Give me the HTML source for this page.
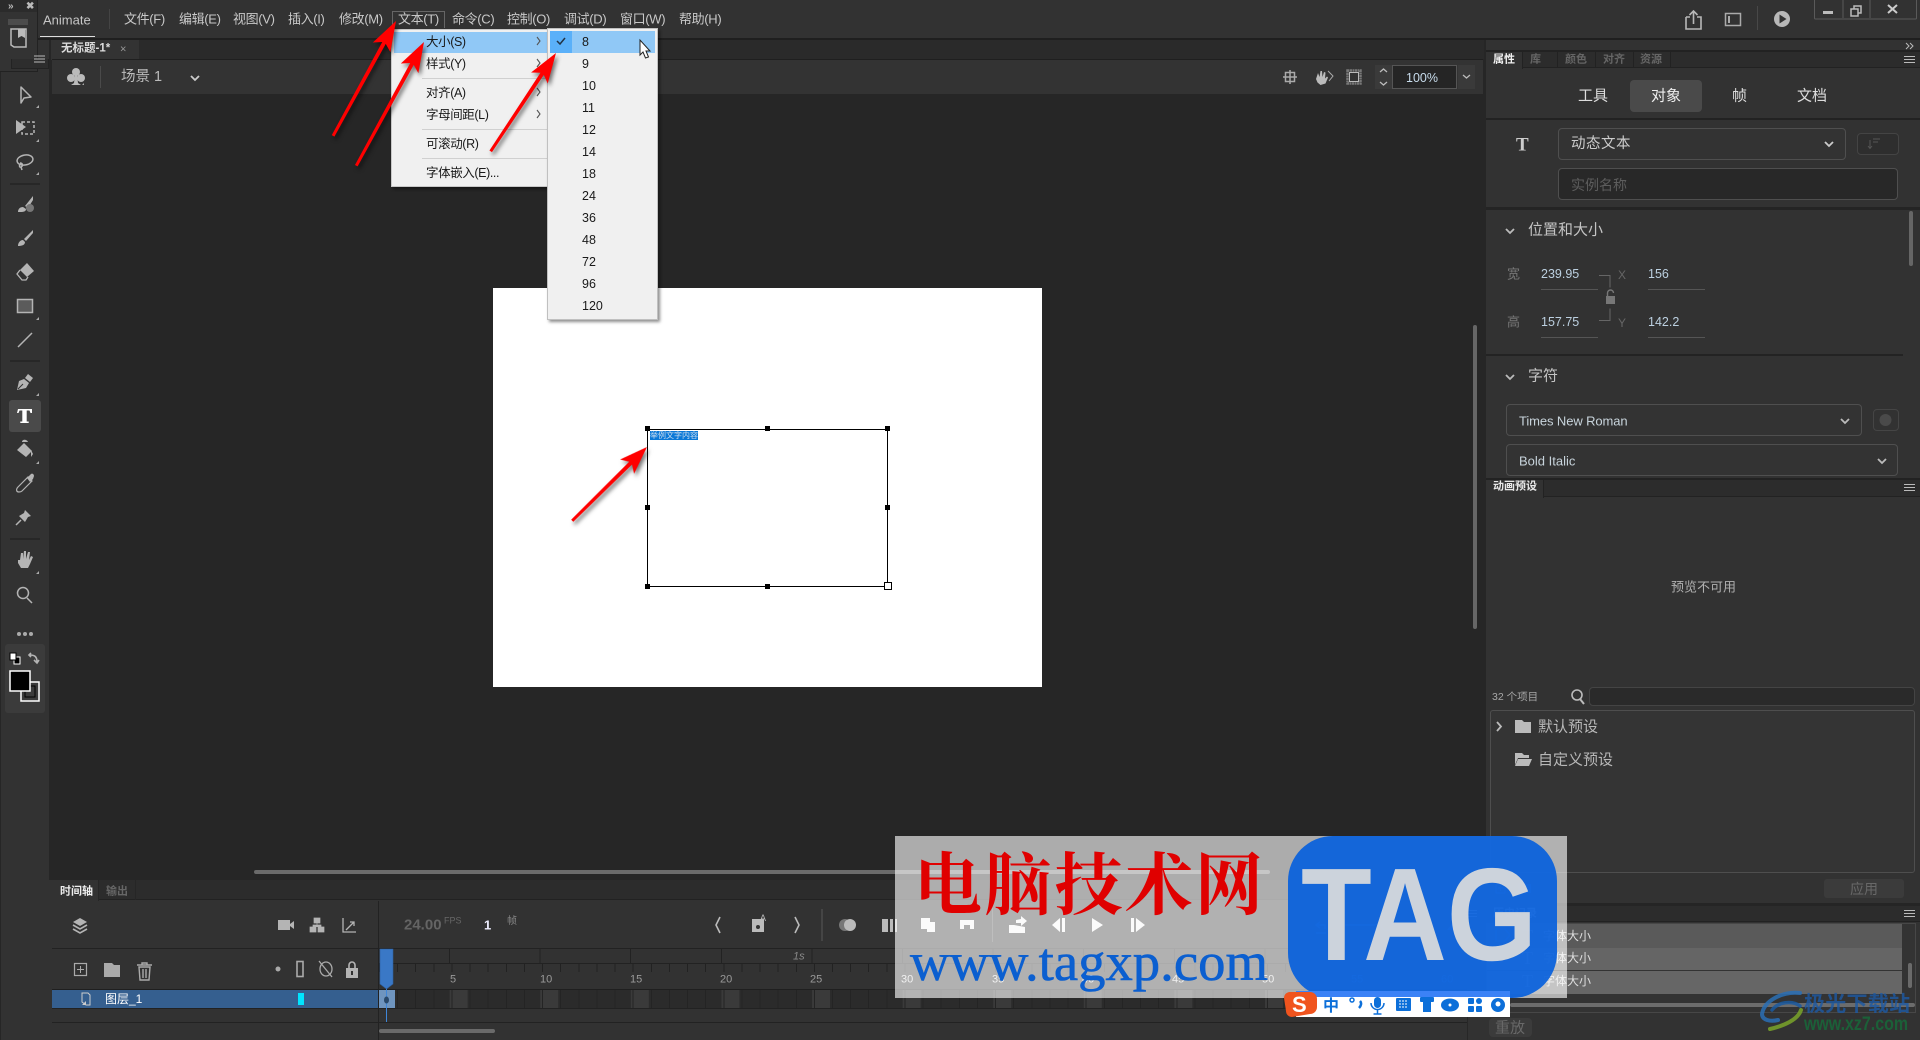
<!DOCTYPE html>
<html lang="zh"><head><meta charset="utf-8"><title>Animate</title>
<style>
html,body{margin:0;padding:0;width:1920px;height:1040px;overflow:hidden;background:#323232}
body{position:relative;font-family:"Liberation Sans","Noto Sans CJK SC",sans-serif;color:#ccc}
div.a{position:absolute;box-sizing:border-box}
.t{position:absolute;white-space:nowrap;line-height:1;transform:translateY(calc(-50% + 1px));font-size:13px}
svg.full{position:absolute;left:0;top:0;width:1920px;height:1040px}
.m{color:#c8c8c8;letter-spacing:-.35px}
.k{color:#1a1a1a;font-size:12.5px}
.n{letter-spacing:-.4px}
.d{border:1px solid #4f4f4f;border-radius:4px}
.ico{fill:#b4b4b4;stroke:none}
.ln{fill:none;stroke:#b4b4b4;stroke-width:1.5}
</style></head><body>

<!-- canvas area -->
<div class="a" style="left:49px;top:39px;width:1437px;height:841px;background:#262626"></div>
<div class="a" style="left:0;top:0;width:1920px;height:38px;background:#323232"></div>
<div class="a" style="left:0;top:38px;width:1920px;height:2px;background:#1f1f1f"></div>
<div class="a" style="left:0;top:40px;width:49px;height:1000px;background:#323232;border-left:1px solid #262626"></div>
<div class="a" style="left:52px;top:40px;width:1432px;height:19px;background:#2a2a2a"></div>
<div class="a" style="left:51px;top:40px;width:88px;height:20px;background:#333"></div>
<div class="a" style="left:52px;top:59px;width:1431px;height:1px;background:#1f1f1f"></div>
<div class="a" style="left:52px;top:60px;width:1431px;height:34px;background:#333"></div>
<div class="a" style="left:493px;top:288px;width:549px;height:399px;background:#fff"></div>

<!-- text box on stage -->
<div class="a" style="left:647px;top:429px;width:241px;height:158px;border:1px solid #000"></div>
<div class="a" style="left:650px;top:431px;width:48px;height:9px;background:#0a78d7;color:#cde;font-size:8px;line-height:9px;white-space:nowrap;overflow:hidden">举例文字内容</div>
<div class="a" style="left:645px;top:426px;width:5px;height:5px;background:#000"></div>
<div class="a" style="left:765px;top:426px;width:5px;height:5px;background:#000"></div>
<div class="a" style="left:885px;top:426px;width:5px;height:5px;background:#000"></div>
<div class="a" style="left:645px;top:505px;width:5px;height:5px;background:#000"></div>
<div class="a" style="left:885px;top:505px;width:5px;height:5px;background:#000"></div>
<div class="a" style="left:645px;top:584px;width:5px;height:5px;background:#000"></div>
<div class="a" style="left:765px;top:584px;width:5px;height:5px;background:#000"></div>
<div class="a" style="left:884px;top:582px;width:8px;height:8px;background:#fff;border:1px solid #000"></div>

<!-- scrollbars -->
<div class="a" style="left:1473px;top:325px;width:4px;height:304px;background:#666;border-radius:2px"></div>
<div class="a" style="left:254px;top:870px;width:1016px;height:4px;background:#6a6a6a;border-radius:2px"></div>

<!-- right panel -->
<div class="a" style="left:1486px;top:40px;width:434px;height:1000px;background:#323232"></div>
<div class="a" style="left:1486px;top:50px;width:434px;height:2px;background:#222"></div>
<div class="a" style="left:1486px;top:52px;width:434px;height:16px;background:#2c2c2c;border-bottom:1px solid #222"></div>
<div class="a" style="left:1486px;top:52px;width:37px;height:17px;background:#323232;border-right:1px solid #222"></div>
<div class="a" style="left:1557px;top:52px;width:1px;height:16px;background:#222"></div>
<div class="a" style="left:1595px;top:52px;width:1px;height:16px;background:#222"></div>
<div class="a" style="left:1633px;top:52px;width:1px;height:16px;background:#222"></div>
<div class="a" style="left:1670px;top:52px;width:1px;height:16px;background:#222"></div>
<span class="t" style="left:1493px;top:59px;font-size:11px;font-weight:700;color:#f0f0f0">属性</span>
<span class="t" style="left:1530px;top:59px;font-size:11px;font-weight:700;color:#666">库</span>
<span class="t" style="left:1565px;top:59px;font-size:11px;font-weight:700;color:#666">颜色</span>
<span class="t" style="left:1603px;top:59px;font-size:11px;font-weight:700;color:#666">对齐</span>
<span class="t" style="left:1640px;top:59px;font-size:11px;font-weight:700;color:#666">资源</span>
<div class="a" style="left:1630px;top:80px;width:72px;height:32px;background:#4a4a4a;border-radius:4px"></div>
<span class="t" style="left:1578px;top:95px;font-size:15px;color:#ddd">工具</span>
<span class="t" style="left:1651px;top:95px;font-size:15px;color:#eee">对象</span>
<span class="t" style="left:1732px;top:95px;font-size:15px;color:#ddd">帧</span>
<span class="t" style="left:1797px;top:95px;font-size:15px;color:#ddd">文档</span>
<div class="a" style="left:1486px;top:118px;width:434px;height:2px;background:#222"></div>
<span class="t" style="left:1516px;top:144px;font-size:19px;font-family:'Liberation Serif',serif;font-weight:700;color:#ccc">T</span>
<div class="a d" style="left:1558px;top:128px;width:288px;height:32px;background:#333"></div>
<span class="t" style="left:1571px;top:143px;font-size:14.5px;color:#ccc;letter-spacing:.5px">动态文本</span>
<div class="a d" style="left:1857px;top:133px;width:42px;height:22px;background:#2e2e2e;border-color:#444"></div>
<div class="a d" style="left:1558px;top:168px;width:340px;height:32px;background:#282828"></div>
<span class="t" style="left:1571px;top:184px;font-size:14px;color:#5d5d5d">实例名称</span>
<div class="a" style="left:1486px;top:207px;width:434px;height:3px;background:#242424"></div>
<span class="t" style="left:1528px;top:229px;font-size:15px;color:#c4c4c4">位置和大小</span>
<div class="a" style="left:1909px;top:211px;width:4px;height:55px;background:#666;border-radius:2px"></div>
<span class="t" style="left:1507px;top:273px;font-size:13px;color:#777">宽</span>
<span class="t" style="left:1507px;top:321px;font-size:13px;color:#777">高</span>
<span class="t" style="left:1541px;top:273px;font-size:12.5px;color:#bcd0e0">239.95</span>
<span class="t" style="left:1541px;top:321px;font-size:12.5px;color:#bcd0e0">157.75</span>
<span class="t" style="left:1618px;top:274px;font-size:12px;color:#666">X</span>
<span class="t" style="left:1618px;top:322px;font-size:12px;color:#666">Y</span>
<span class="t" style="left:1648px;top:273px;font-size:12.5px;color:#bcd0e0">156</span>
<span class="t" style="left:1648px;top:321px;font-size:12.5px;color:#bcd0e0">142.2</span>
<div class="a" style="left:1541px;top:289px;width:57px;height:1px;background:#555"></div>
<div class="a" style="left:1648px;top:289px;width:57px;height:1px;background:#555"></div>
<div class="a" style="left:1541px;top:337px;width:57px;height:1px;background:#555"></div>
<div class="a" style="left:1648px;top:337px;width:57px;height:1px;background:#555"></div>
<div class="a" style="left:1486px;top:354px;width:417px;height:2px;background:#232323"></div>
<span class="t" style="left:1528px;top:375px;font-size:15px;color:#c4c4c4">字符</span>
<div class="a d" style="left:1506px;top:404px;width:356px;height:32px;background:#333"></div>
<span class="t" style="left:1519px;top:420px;font-size:13px;color:#c8d4dc;letter-spacing:-.1px">Times New Roman</span>
<div class="a d" style="left:1873px;top:409px;width:26px;height:22px;border-color:#454545"></div>
<div class="a d" style="left:1506px;top:444px;width:392px;height:32px;background:#333"></div>
<span class="t" style="left:1519px;top:460px;font-size:13px;color:#c8d4dc">Bold Italic</span>

<div class="a" style="left:1486px;top:478px;width:434px;height:2px;background:#222"></div>
<div class="a" style="left:1486px;top:480px;width:434px;height:17px;background:#2c2c2c;border-bottom:1px solid #222"></div>
<div class="a" style="left:1486px;top:480px;width:58px;height:18px;background:#323232;border-right:1px solid #222"></div>
<span class="t" style="left:1493px;top:486px;font-size:11px;font-weight:700;color:#e8e8e8">动画预设</span>
<span class="t" style="left:1671px;top:586px;font-size:13px;color:#b0b0b0">预览不可用</span>
<span class="t" style="left:1492px;top:696px;font-size:10.5px;color:#a8a8a8">32 个项目</span>
<div class="a" style="left:1589px;top:687px;width:326px;height:19px;background:#2a2a2a;border:1px solid #444;border-radius:4px"></div>
<div class="a" style="left:1490px;top:710px;width:425px;height:163px;border:1px solid #4e4e4e;border-radius:3px;background:#343434"></div>
<span class="t" style="left:1538px;top:726px;font-size:15px;color:#b8b8b8">默认预设</span>
<span class="t" style="left:1538px;top:759px;font-size:15px;color:#b8b8b8">自定义预设</span>
<div class="a" style="left:1824px;top:879px;width:80px;height:19px;background:#3b3b3b;border-radius:3px"></div>
<span class="t" style="left:1850px;top:888px;font-size:14px;color:#686868">应用</span>
<div class="a" style="left:1486px;top:903px;width:434px;height:3px;background:#252525"></div>
<div class="a" style="left:1486px;top:906px;width:434px;height:16px;background:#2c2c2c;border-bottom:1px solid #222"></div>
<div class="a" style="left:1486px;top:906px;width:60px;height:17px;background:#323232;border-right:1px solid #222"></div>
<span class="t" style="left:1493px;top:913px;font-size:11px;font-weight:700;color:#e8e8e8">历史记录</span>
<div class="a" style="left:1486px;top:923px;width:430px;height:90px;border:1px solid #474747;background:#333"></div>
<div class="a" style="left:1487px;top:924px;width:415px;height:24px;background:#5a5a5a"></div>
<div class="a" style="left:1487px;top:948px;width:415px;height:22px;background:#656565"></div>
<div class="a" style="left:1487px;top:971px;width:415px;height:23px;background:#666"></div>
<span class="t" style="left:1543px;top:935px;font-size:12px;color:#ddd">字体大小</span>
<span class="t" style="left:1543px;top:957px;font-size:12px;color:#ddd">字体大小</span>
<span class="t" style="left:1543px;top:980px;font-size:12px;color:#ddd">字体大小</span>
<span class="t" style="left:1522px;top:935px;font-size:18px;font-family:'Liberation Serif',serif;color:#ddd">T</span>
<span class="t" style="left:1522px;top:957px;font-size:18px;font-family:'Liberation Serif',serif;color:#ddd">T</span>
<span class="t" style="left:1522px;top:980px;font-size:18px;font-family:'Liberation Serif',serif;color:#ddd">T</span>
<div class="a" style="left:1908px;top:963px;width:4px;height:25px;background:#6a6a6a;border-radius:2px"></div>
<div class="a" style="left:1510px;top:1003px;width:405px;height:4px;background:#6c6c6c;border-radius:2px"></div>
<div class="a" style="left:1489px;top:1018px;width:43px;height:19px;background:#3b3b3b;border-radius:4px"></div>
<span class="t" style="left:1495px;top:1027px;font-size:15px;color:#686868">重放</span>

<!-- timeline -->
<div class="a" style="left:52px;top:880px;width:1432px;height:160px;background:#323232"></div>
<div class="a" style="left:52px;top:880px;width:1415px;height:20px;background:#2c2c2c;border-bottom:1px solid #222"></div>
<div class="a" style="left:52px;top:880px;width:47px;height:21px;background:#323232;border-right:1px solid #262626"></div>
<div class="a" style="left:135px;top:880px;width:1px;height:20px;background:#262626"></div>
<span class="t" style="left:60px;top:891px;font-size:11px;font-weight:700;color:#eee">时间轴</span>
<span class="t" style="left:106px;top:891px;font-size:11px;font-weight:700;color:#666">输出</span>
<div class="a" style="left:52px;top:948px;width:1415px;height:1px;background:#222"></div>
<div class="a" style="left:378px;top:901px;width:1px;height:139px;background:#222"></div>
<div class="a" style="left:1467px;top:880px;width:1px;height:160px;background:#272727"></div>
<!-- ruler -->
<div class="a" style="left:379px;top:949px;width:1088px;height:14px;background:repeating-linear-gradient(90deg,transparent 0 70px,#222 70px 71px,transparent 71px 90.6px)"></div>
<div class="a" style="left:379px;top:963px;width:1088px;height:1px;background:#222"></div>
<div class="a" style="left:379px;top:964px;width:1088px;height:8px;background:repeating-linear-gradient(90deg,#222 0 1px,transparent 1px 18.12px)"></div>
<span class="t" style="left:793px;top:956px;font-size:11px;font-style:italic;color:#888">1s</span>
<span class="t" style="left:450px;top:979px;font-size:11px;color:#999">5</span>
<span class="t" style="left:540px;top:979px;font-size:11px;color:#999">10</span>
<span class="t" style="left:630px;top:979px;font-size:11px;color:#999">15</span>
<span class="t" style="left:720px;top:979px;font-size:11px;color:#999">20</span>
<span class="t" style="left:810px;top:979px;font-size:11px;color:#999">25</span>
<span class="t" style="left:901px;top:979px;font-size:11px;color:#ddd">30</span>
<span class="t" style="left:992px;top:979px;font-size:11px;color:#ddd">35</span>
<span class="t" style="left:1082px;top:979px;font-size:11px;color:#ddd">40</span>
<span class="t" style="left:1172px;top:979px;font-size:11px;color:#ddd">45</span>
<span class="t" style="left:1262px;top:979px;font-size:11px;color:#ddd">50</span>
<span class="t" style="left:1351px;top:979px;font-size:11px;color:#3a78d8">55</span>
<span class="t" style="left:1441px;top:979px;font-size:11px;color:#3a78d8">60</span>
<div class="a" style="left:52px;top:989px;width:1415px;height:1px;background:#1f1f1f"></div>
<div class="a" style="left:52px;top:990px;width:326px;height:18px;background:#355f8f"></div>
<div class="a" style="left:379px;top:990px;width:1088px;height:18px;background-color:#2b2b2b;background-image:repeating-linear-gradient(90deg,#242424 0 1px,transparent 1px 18.12px),linear-gradient(90deg,transparent 70.5px,#3a3a3a 70.5px 88.6px,transparent 88.6px);background-size:auto,90.6px 100%"></div>
<div class="a" style="left:379px;top:990px;width:16px;height:18px;background:#6f95bf"></div>
<div class="a" style="left:298px;top:993px;width:6px;height:12px;background:#00e5ff"></div>
<span class="t" style="left:105px;top:998px;font-size:12px;color:#fff">图层_1</span>
<div class="a" style="left:52px;top:1008px;width:1415px;height:1px;background:#222"></div>
<div class="a" style="left:52px;top:1022px;width:1415px;height:1px;background:#222"></div>
<div class="a" style="left:379px;top:1029px;width:116px;height:4px;background:#6a6a6a;border-radius:2px"></div>
<div class="a" style="left:386px;top:985px;width:1px;height:37px;background:#3f86d8"></div>
<span class="t" style="left:404px;top:924px;font-size:15px;font-weight:700;color:#646464">24.00</span>
<span class="t" style="left:444px;top:920px;font-size:9px;color:#666">FPS</span>
<span class="t" style="left:484px;top:924px;font-size:13px;font-weight:700;color:#eef">1</span>
<span class="t" style="left:507px;top:921px;font-size:10px;color:#888">帧</span>

<!-- menu bar text -->
<span class="t" style="left:43px;top:19px;color:#c6c6c6">Animate</span>
<div class="a" style="left:40px;top:36px;width:55px;height:1px;background:#ddd"></div>
<div class="a" style="left:109px;top:9px;width:1px;height:20px;background:#444"></div>
<div class="a" style="left:392px;top:11px;width:53px;height:17px;border:1px solid #666;border-bottom:0"></div>
<span class="t m" style="left:124px;top:18px">文件(F)</span>
<span class="t m" style="left:179px;top:18px">编辑(E)</span>
<span class="t m" style="left:233px;top:18px">视图(V)</span>
<span class="t m" style="left:288px;top:18px">插入(I)</span>
<span class="t m" style="left:339px;top:18px">修改(M)</span>
<span class="t m" style="left:398px;top:18px">文本(T)</span>
<span class="t m" style="left:452px;top:18px">命令(C)</span>
<span class="t m" style="left:507px;top:18px">控制(O)</span>
<span class="t m" style="left:564px;top:18px">调试(D)</span>
<span class="t m" style="left:620px;top:18px">窗口(W)</span>
<span class="t m" style="left:679px;top:18px">帮助(H)</span>
<span class="t" style="left:61px;top:48px;font-size:11.5px;font-weight:700;color:#ddd">无标题-1*</span>
<span class="t" style="left:120px;top:49px;font-size:11px;color:#999">×</span>
<span class="t" style="left:121px;top:76px;font-size:14.5px;color:#bbb">场景 1</span>
<div class="a" style="left:1392px;top:65px;width:65px;height:24px;background:#252525;border:1px solid #555"></div>
<div class="a" style="left:1375px;top:65px;width:17px;height:24px;background:#3a3a3a"></div>
<div class="a" style="left:1458px;top:65px;width:17px;height:24px;background:#3a3a3a"></div>
<span class="t" style="left:1406px;top:77px;font-size:12.5px;color:#c8dcec">100%</span>

<!-- top-left floating -->
<div class="a" style="left:0;top:0;width:38px;height:72px;background:#333;border:1px solid #222;border-left:0"></div>
<div class="a" style="left:0;top:0;width:37px;height:12px;background:#2b2b2b"></div>
<div class="a" style="left:11px;top:59px;width:38px;height:10px;background:#2d2d2d;border:1px solid #232323;border-top:0"></div>
<span class="t" style="left:8px;top:6px;font-size:10px;font-weight:700;color:#bbb">»</span>
<span class="t" style="left:26px;top:6px;font-size:10px;font-weight:700;color:#bbb">✖</span>

<!-- icons -->
<svg class="full" viewBox="0 0 1920 1040">
<!-- book -->
<path d="M11 29h15v18H14l-3-2z" fill="none" stroke="#bbb" stroke-width="1.5"/><path d="M18 29h7v9l-3.500-2-3.500 2z" fill="#bbb"/>
<g stroke="#666"><path d="M9 19v6M11 19v6M13 19v6M15 19v6M17 19v6M19 19v6M21 19v6M23 19v6M25 19v6M27 19v6"/></g>
<g stroke="#bbb"><path d="M34 56h11M34 59h11M34 62h11" /></g>
<!-- tools -->
<path d="M21 87 L31 97 L24 98 L21 103Z" class="ln" stroke-linejoin="round"/>
<path d="M16 120l10 7-10 7z" class="ico"/><rect x="22" y="122" width="12" height="12" fill="none" stroke="#b4b4b4" stroke-width="1.5" stroke-dasharray="3 2"/>
<ellipse cx="25" cy="160" rx="8" ry="5" class="ln" transform="rotate(-10 25 160)"/><path d="M20 163c3 0 3 3 1 4s-2-3 0-3M21 167l1 3" class="ln" stroke-width="1"/>
<rect x="10" y="183" width="30" height="2" fill="#272727"/>
<path d="M33 196l-8 10 3 2 5-8zM18 212c0-3 2-5 5-5l3 2c0 3-3 3-8 3z" class="ico"/><circle cx="30" cy="208" r="4" fill="#777"/>
<path d="M33 230l-9 9 2 2 7-8zM18 246c0-3 2-6 5-6l2 2c0 3-3 4-7 4z" class="ico"/>
<path d="M27 263l7 8-7 6-7-7z" class="ico"/><path d="M20 270l-3 4 5 6h4l2-3" fill="none" stroke="#b4b4b4" stroke-width="1.300"/>
<rect x="17.500" y="299.500" width="15" height="13" fill="#5b5b5b" stroke="#b4b4b4" stroke-width="1.500"/>
<path d="M18 347l14-14" class="ln"/>
<rect x="10" y="360" width="30" height="2" fill="#272727"/>
<path d="M28 374l5 4-3 4-5-4z" class="ico"/><path d="M24 379l5 4-3 5-9 2 2-9z" class="ico"/><path d="M18 389l5-5" stroke="#323232"/>
<rect x="9" y="400" width="32" height="32" rx="3" fill="#4a4a4a"/>
<path d="M18 409h14v4h-1.500l-1-2.500h-2.800v11h2v1.500h-8.400v-1.500h2v-11h-2.800l-1 2.500h-1.500z" fill="#fff"/>
<path d="M17 450l7-7 8 8-6 6zM22 442c0-3 5-3 6 0" class="ico"/><path d="M31 450l2 4 -2 3 0-3z" class="ico"/>
<path d="M19 492c-3 0-3-3-1-5l10-10 4 4-10 10c-1 1-2 1-3 1z" fill="none" stroke="#b4b4b4" stroke-width="1.200"/><path d="M27 478l4-4c1-1 3 0 3 2l-1 3-3 3z" class="ico"/>
<path d="M25 510l6 6-3 1-3 5-6-6 5-3z" class="ico"/><path d="M21 520l-5 5" stroke="#b4b4b4" stroke-width="1.500"/>
<rect x="10" y="538" width="30" height="2" fill="#272727"/>
<path d="M18 560l2 0 1-7 2 0 0 6 1-8 2 0 0 8 2-7 2 0-1 8 2-4 2 1-3 7-2 4h-7l-3-5z" class="ico"/>
<circle cx="23" cy="593" r="5.500" class="ln"/><path d="M27 598l5 5" class="ln"/>
<circle cx="19" cy="634" r="2" fill="#aaa"/><circle cx="25" cy="634" r="2" fill="#aaa"/><circle cx="31" cy="634" r="2" fill="#aaa"/>
<rect x="5" y="644" width="40" height="69" rx="3" fill="#3b3b3b"/>
<rect x="14" y="657" width="6" height="7" fill="#000" stroke="#fff"/><rect x="10" y="653" width="6" height="7" fill="#fff" stroke="#000" stroke-width="1"/>
<path d="M31 653l-2 2 2 2M30 655c5 0 7 2 7 7M34 660l3 3 2-3" fill="none" stroke="#b4b4b4" stroke-width="1.600"/>
<rect x="21" y="682" width="18" height="19" fill="#3b3b3b" stroke="#fff" stroke-width="1.500"/><rect x="25" y="686" width="10" height="11" fill="#3b3b3b" stroke="#000"/>
<rect x="10" y="671" width="20" height="20" fill="#000" stroke="#fff" stroke-width="1.500"/>
<!-- tool corner marks -->
<g fill="#aaa"><path d="M39 108v-3l-3 3zM39 142v-3l-3 3zM39 175v-3l-3 3zM39 320v-3l-3 3zM39 396v-3l-3 3zM39 464v-3l-3 3zM39 574v-3l-3 3z"/></g>
<!-- scene bar -->
<circle cx="76" cy="72" r="4" fill="#bbb"/><circle cx="71" cy="78" r="4" fill="#bbb"/><circle cx="81" cy="78" r="4" fill="#bbb"/><path d="M75 74h2l1 9 3 2h-10l3-2z" fill="#bbb"/>
<path d="M84 85v-2l-2 2z" fill="#aaa"/>
<rect x="100" y="66" width="1" height="22" fill="#4a4a4a"/>
<path d="M191 76l4 4 4-4" fill="none" stroke="#ccc" stroke-width="1.800"/>
<!-- top right icons -->
<path d="M1686 17v12h15V17h-4M1690 17h-4M1693.500 24V12M1689.500 15l4-4 4 4" fill="none" stroke="#b8b8b8" stroke-width="1.600"/>
<rect x="1725.500" y="13.500" width="15" height="12" fill="none" stroke="#aaa" stroke-width="1.500"/><rect x="1728" y="16" width="2" height="7" fill="#aaa"/>
<rect x="1757" y="6" width="1" height="24" fill="#484848"/>
<circle cx="1782" cy="19" r="8" fill="#b8b8b8"/><path d="M1779.500 14.500l7 4.500-7 4.500z" fill="#323232"/>
<path d="M1814.500 0v18c0 .5.500 1 1 1h100c.5 0 1-.5 1-1V0M1843 0v18M1870 0v18" fill="none" stroke="#5a5a5a"/>
<rect x="1823" y="11" width="10" height="3" fill="#bbb"/>
<path d="M1851 9h7v7h-7zM1854 9V6h7v7h-3" fill="none" stroke="#bbb" stroke-width="1.500"/>
<path d="M1888 5l9 8M1897 5l-9 8" stroke="#ccc" stroke-width="2"/>
<!-- right panel bits -->
<path d="M1906 43l3 3-3 3M1910 43l3 3-3 3" fill="none" stroke="#bbb"/>
<g stroke="#bbb"><path d="M1904 56.500h11M1904 59.500h11M1904 62.500h11M1904 484.500h11M1904 487.500h11M1904 490.500h11M1904 910.500h11M1904 913.500h11M1904 916.500h11"/></g>
<path d="M1465 910.500h12M1465 913.500h12M1465 916.500h12" stroke="#eee"/>
<path d="M1825 142l4 4 4-4" fill="none" stroke="#ccc" stroke-width="1.800"/>
<path d="M1870 140v8M1868 146l2 2.500 2-2.500M1873 139h7M1873 142h5" stroke="#555" fill="none"/>
<path d="M1506 229l4 4 4-4M1506 375l4 4 4-4M1841 419l4 4 4-4M1878 459l4 4 4-4" fill="none" stroke="#bbb" stroke-width="1.800"/>
<path d="M1599 275.500h11v12M1599 320.500h11v-12" fill="none" stroke="#666"/>
<rect x="1606" y="296" width="9" height="8" fill="#777"/><path d="M1607.500 296v-3a3 3 0 0 1 6 0" fill="none" stroke="#777" stroke-width="1.400"/>
<circle cx="1885.500" cy="420" r="6" fill="#4a4a4a"/>
<circle cx="1577" cy="695" r="5" fill="none" stroke="#bbb" stroke-width="1.600"/><path d="M1580 699l4 5" stroke="#bbb" stroke-width="2"/>
<path d="M1497 722l4 4.500-4 4.500" fill="none" stroke="#bbb" stroke-width="1.800"/>
<path d="M1515 720h7l2 2h7v11h-16z" fill="#bbb"/>
<path d="M1515 753h7l2 2h5v3h-11l-3 7z" fill="#bbb"/><path d="M1518 759h14l-3 7h-14z" fill="#bbb"/>
<path d="M1496 883h9v10h-9zM1500.500 885v6M1497.500 888h6" fill="none" stroke="#3a78d8"/>
<path d="M1518 883h5l1 1h7v9h-13z" fill="#3a78d8"/>
<path d="M1496 929h9l5 6-5 6h-9z" fill="none" stroke="#2a6fd8" stroke-width="1.500"/>
<!-- scene right -->
<path d="M1290 70v14M1283 77h14" stroke="#aaa" stroke-width="1.500"/><rect x="1285.500" y="72.500" width="9" height="9" fill="none" stroke="#aaa" stroke-width="1.500"/>
<path d="M1316 79l2-6 1.500 4 1-6 1.500 0 .5 6 1.500-5 1.500 .5-.5 6 2-2 1 1-2.500 6-5 1.500-3-2.500z" fill="#bbb"/><path d="M1328 71l5 5-4 5" fill="none" stroke="#aaa"/>
<rect x="1347.500" y="70.500" width="13" height="13" fill="none" stroke="#777" stroke-width="2.500" stroke-dasharray="2 .5"/><rect x="1349.500" y="72.500" width="9" height="9" fill="#333" stroke="#bbb"/>
<path d="M1380 72l3.500-3 3.500 3M1380 82l3.500 3 3.500-3M1463 75l3.500 3 3.500-3" fill="none" stroke="#bbb" stroke-width="1.300"/>
<!-- timeline icons -->
<path d="M80 918l7 4-7 4-7-4z" fill="#b4b4b4"/><path d="M73 925l7 4 7-4M73 929l7 4 7-4" fill="none" stroke="#b4b4b4" stroke-width="1.600"/>
<path d="M278 920h12v10h-12zM290 924l4-3v8l-4-3z" fill="#b4b4b4"/>
<path d="M314 918h6v5h-6zM310 927h6v5h-6zM318 927h6v5h-6zM317 923v2M313 927v-2h8v2" fill="#b4b4b4" stroke="#b4b4b4" stroke-width=".7"/>
<path d="M343 918v14h13M346 930l8-8M350 922h4v4" fill="none" stroke="#b4b4b4" stroke-width="1.300"/>
<rect x="74.500" y="963.500" width="12" height="12" fill="none" stroke="#aaa" stroke-width="1.200"/><path d="M80.500 966v7M77 969.500h7" stroke="#aaa"/>
<path d="M104 963h8l2 2h6v12h-16z" fill="#aaa"/>
<path d="M137 965h15M139 967l1 13h9l1-13zM142 965v-2h5v2M143 969v9M146 969v9" fill="none" stroke="#aaa" stroke-width="1.400"/>
<circle cx="278" cy="969" r="2.500" fill="#aaa"/>
<rect x="297" y="961.500" width="6" height="15" fill="none" stroke="#aaa" stroke-width="1.600"/>
<ellipse cx="326" cy="969" rx="6" ry="7" fill="none" stroke="#aaa" stroke-width="1.300"/><path d="M319 961l13 16" stroke="#aaa" stroke-width="1.300"/>
<rect x="346" y="968" width="12" height="10" fill="#b4b4b4"/><path d="M349 968v-3a3 3 0 0 1 6 0v3" fill="none" stroke="#b4b4b4" stroke-width="1.600"/><rect x="351" y="971" width="2" height="4" fill="#323232"/>
<path d="M82 993h6l2 2v10h-4l-4-3z" fill="none" stroke="#ccc"/><path d="M86 1001v4h-4z" fill="#ccc"/>
<path d="M380 949h13v35l-6.500 5-6.500-5z" fill="#3a78c6" stroke="#2d5f9f" stroke-width=".6"/>
<ellipse cx="386.500" cy="1000" rx="2.500" ry="3.500" fill="#29496b"/>
<path d="M720 917l-4 8 4 8M795 917l4 8-4 8" fill="none" stroke="#bbb" stroke-width="1.600"/>
<rect x="752" y="919" width="12" height="13" fill="#bbb"/><circle cx="758" cy="927" r="2" fill="#333"/><text x="760" y="921" fill="#bbb" font-size="9" font-family="Liberation Sans">A</text>
<rect x="821" y="909" width="2" height="32" fill="#454545"/>
<circle cx="845" cy="925" r="6" fill="#777"/><circle cx="850" cy="925" r="6" fill="#bbb"/>
<path d="M882 919h6v13h-6zM890 919h3v13h-3zM895 919h2v13h-2z" fill="#bbb"/>
<g fill="#fff"><path d="M921 918h9v4h5v10h-8v-3h-6z" opacity=".95"/><path d="M960 920h14v9h-4v-4h-6v4h-4z" opacity=".95"/><path d="M1014 925h-5v8h16v-6M1016 920l5-1v-3l6 5-6 5v-3h-5z" opacity=".95"/><path d="M1060 918l-8 7 8 7zM1062 918h3v14h-3z" opacity=".95"/><path d="M1092 918l11 7-11 7z" opacity=".95"/><path d="M1131 918h3v14h-3zM1136 918l9 7-9 7z" opacity=".95"/></g>
<rect x="992" y="908" width="1" height="34" fill="#555"/>
<path d="M1320 922l-4 3 4 3M1316 925h9v4M1316 933h10" fill="none" stroke="#2a7ae0" stroke-width="1.600"/>
<path d="M1345 925h33M1394 925h10" stroke="#2a7ae0" stroke-width="1.500"/><circle cx="1387" cy="925" r="5.500" fill="none" stroke="#2a7ae0" stroke-width="1.500"/>
<path d="M1447 930l7-9 4 5 3-3 6 7z" fill="#2a7ae0"/>
</svg>

<!-- dropdown menus -->
<div class="a" style="left:391px;top:29px;width:157px;height:158px;background:#f0f0f0;border:1px solid #c8c8c8;box-shadow:2px 2px 3px rgba(0,0,0,.45)"></div>
<div class="a" style="left:394px;top:32px;width:154px;height:21px;background:#90c8f6"></div>
<div class="a" style="left:422px;top:78px;width:125px;height:1px;background:#d0d0d0"></div>
<div class="a" style="left:422px;top:129px;width:125px;height:1px;background:#d0d0d0"></div>
<div class="a" style="left:422px;top:158px;width:125px;height:1px;background:#d0d0d0"></div>
<span class="t k n" style="left:426px;top:41px">大小(S)</span>
<span class="t k n" style="left:426px;top:63px">样式(Y)</span>
<span class="t k n" style="left:426px;top:92px">对齐(A)</span>
<span class="t k n" style="left:426px;top:114px">字母间距(L)</span>
<span class="t k n" style="left:426px;top:143px">可滚动(R)</span>
<span class="t k n" style="left:426px;top:172px">字体嵌入(E)...</span>
<div class="a" style="left:547px;top:28px;width:111px;height:292px;background:#f0f0f0;border:1px solid #c0c0c0;box-shadow:2px 2px 3px rgba(0,0,0,.45)"></div>
<div class="a" style="left:550px;top:31px;width:105px;height:22px;background:#90c8f6"></div>
<div class="a" style="left:550px;top:31px;width:22px;height:22px;background:#5ab0f9"></div>
<span class="t k" style="left:582px;top:41px">8</span>
<span class="t k" style="left:582px;top:63px">9</span>
<span class="t k" style="left:582px;top:85px">10</span>
<span class="t k" style="left:582px;top:107px">11</span>
<span class="t k" style="left:582px;top:129px">12</span>
<span class="t k" style="left:582px;top:151px">14</span>
<span class="t k" style="left:582px;top:173px">18</span>
<span class="t k" style="left:582px;top:195px">24</span>
<span class="t k" style="left:582px;top:217px">36</span>
<span class="t k" style="left:582px;top:239px">48</span>
<span class="t k" style="left:582px;top:261px">72</span>
<span class="t k" style="left:582px;top:283px">96</span>
<span class="t k" style="left:582px;top:305px">120</span>

<svg class="full" viewBox="0 0 1920 1040">
<path d="M537 37l3 4-3 4M537 59l3 4-3 4M537 88l3 4-3 4M537 110l3 4-3 4" fill="none" stroke="#555" stroke-width="1.100"/>
<path d="M557 41l3 3 5-6" fill="none" stroke="#234" stroke-width="1.500"/>
<path d="M640 40v15l3-3 2.500 6 3-1-2.500-6h4z" fill="#fff" stroke="#222"/>
<!-- overlay watermark -->
<rect x="895" y="836" width="672" height="162" fill="#fff" fill-opacity=".62"/>
<path d="M1333 836h179a45 45 0 0 1 45 45v72a45 45 0 0 1-45 45h-179a45 45 0 0 1-45-45v-72a45 45 0 0 1 45-45z" fill="#075fdc" fill-opacity=".92"/>
<text x="1301" y="960" font-family="Liberation Sans" font-weight="700" font-size="132" fill="#dcdcdc" fill-opacity=".92" textLength="236" lengthAdjust="spacingAndGlyphs">TAG</text>
<text x="914" y="909" font-family="Noto Serif CJK SC,serif" font-weight="700" font-size="68" fill="#e00000" textLength="349">电脑技术网</text>
<text x="910" y="980" font-family="Liberation Serif" font-size="54" fill="#0b5fd0" stroke="#0b5fd0" stroke-width=".6" textLength="358" lengthAdjust="spacingAndGlyphs">www.tagxp.com</text>
<!-- sogou -->
<rect x="1296" y="991" width="214" height="26" fill="#fff"/><rect x="1296" y="991" width="214" height="6" fill="#3b82f6"/>
<path d="M1290 992h20a7 7 0 0 1 7 7v8a7 7 0 0 1-7 7l-18 3a6 6 0 0 1-6-6l-2-13a6 6 0 0 1 6-6z" fill="#f0541e"/>
<text x="1292" y="1012" font-family="Liberation Sans" font-weight="700" font-size="22" fill="#fff">S</text>
<text x="1323" y="1011" font-family="Noto Sans CJK SC,sans-serif" font-weight="700" font-size="16" fill="#0c6fd9">中</text>
<circle cx="1352" cy="1000" r="2" fill="none" stroke="#0c6fd9" stroke-width="1.500"/><path d="M1360 1001c2 2 1 5-1 7" stroke="#0c6fd9" stroke-width="2.500" fill="none"/>
<g fill="#0c6fd9"><rect x="1374" y="997" width="7" height="11" rx="3.500"/><path d="M1371 1003a6.500 6.500 0 0 0 13 0M1377.500 1010v4h-4M1377.500 1014h4" fill="none" stroke="#0c6fd9" stroke-width="1.500"/>
<rect x="1396" y="998" width="15" height="13" rx="1"/><rect x="1420" y="997" width="14" height="5" rx="1"/><rect x="1423" y="998" width="8" height="14"/><ellipse cx="1450" cy="1005" rx="9" ry="6.500"/><rect x="1468" y="998" width="6" height="6" rx="1"/><rect x="1476" y="998" width="6" height="6" rx="3"/><rect x="1468" y="1006" width="6" height="6" rx="1"/><rect x="1476" y="1006" width="6" height="6" rx="1"/><circle cx="1498" cy="1005" r="7"/></g>
<path d="M1399 1001h9M1399 1004h9M1399 1007h9" stroke="#fff" stroke-dasharray="2 1"/>
<circle cx="1450" cy="1005" r="1.500" fill="#fff"/><circle cx="1498" cy="1004" r="2.500" fill="#fff"/>
<!-- xz7 -->
<g fill="none" stroke-linecap="round" opacity=".85"><path d="M1800 993c-18-2-36 8-38 21 0 6 8 8 16 6" stroke="#2a6fb5" stroke-width="4"/><path d="M1772 1010c6-8 20-10 28-4" stroke="#1a5aa0" stroke-width="3.500"/><path d="M1801 1010c-3 10-18 16-31 19" stroke="#7aa52a" stroke-width="4"/></g>
<text x="1804" y="1011" font-family="Noto Sans CJK SC,sans-serif" font-weight="700" font-size="21" fill="#1d5aa5" fill-opacity=".8" textLength="106">极光下载站</text>
<text x="1804" y="1030" font-family="Liberation Sans" font-weight="700" font-size="19" fill="#17693a" fill-opacity=".85" textLength="104" lengthAdjust="spacingAndGlyphs">www.xz7.com</text>
<!-- red arrows -->
<g fill="#f00" style="filter:drop-shadow(2px 3px 2px rgba(0,0,0,.55))">
<polygon transform="translate(396 21) rotate(-61.300)" points="0,0 -30,-10 -25,-2 -131,-1.500 -131,1.500 -25,2 -30,10"/>
<polygon transform="translate(424 42) rotate(-61.300)" points="0,0 -30,-10 -25,-2 -141,-1.500 -141,1.500 -25,2 -30,10"/>
<polygon transform="translate(556 53) rotate(-56.400)" points="0,0 -30,-10 -25,-2 -118,-1.500 -118,1.500 -25,2 -30,10"/>
<polygon transform="translate(647 447) rotate(-44.600)" points="0,0 -28,-10 -23,-2 -105,-1.500 -105,1.500 -23,2 -28,10"/>
</g>
</svg>
</body></html>
